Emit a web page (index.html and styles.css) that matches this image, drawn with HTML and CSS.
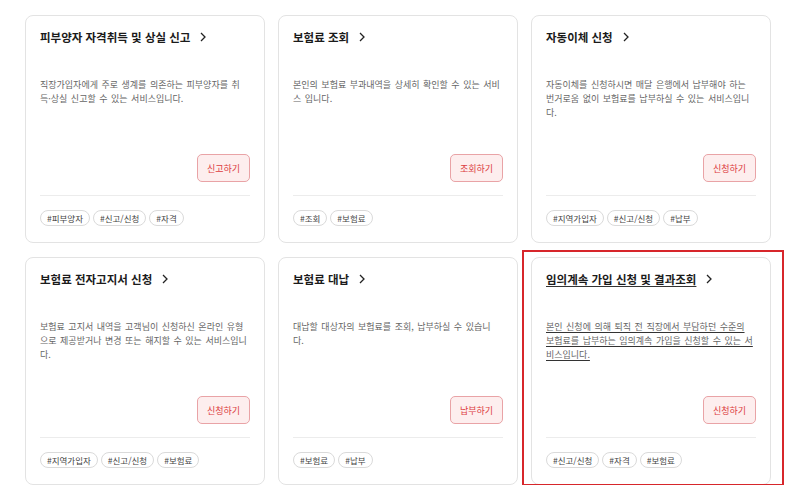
FILE: index.html
```html
<!DOCTYPE html>
<html lang="ko">
<head>
<meta charset="utf-8">
<title>서비스 목록</title>
<link rel="stylesheet" href="styles.css">
</head>
<body>
<main class="grid">
  <article class="card">
    <h3 class="card-title"><span class="title-text">피부양자 자격취득 및 상실 신고</span><svg class="chev" viewBox="0 0 6 10" width="6" height="10"><path d="M1 1l4 4-4 4" fill="none" stroke="#222" stroke-width="1.3"/></svg></h3>
    <p class="card-desc">직장가입자에게 주로 생계를 의존하는 피부양자를 취<br>득·상실 신고할 수 있는 서비스입니다.</p>
    <button class="card-btn">신고하기</button>
    <hr class="divider">
    <ul class="tags"><li>#피부양자</li><li>#신고/신청</li><li>#자격</li></ul>
  </article>
  <article class="card">
    <h3 class="card-title"><span class="title-text">보험료 조회</span><svg class="chev" viewBox="0 0 6 10" width="6" height="10"><path d="M1 1l4 4-4 4" fill="none" stroke="#222" stroke-width="1.3"/></svg></h3>
    <p class="card-desc">본인의 보험료 부과내역을 상세히 확인할 수 있는 서비<br>스 입니다.</p>
    <button class="card-btn">조회하기</button>
    <hr class="divider">
    <ul class="tags"><li>#조회</li><li>#보험료</li></ul>
  </article>
  <article class="card">
    <h3 class="card-title"><span class="title-text">자동이체 신청</span><svg class="chev" viewBox="0 0 6 10" width="6" height="10"><path d="M1 1l4 4-4 4" fill="none" stroke="#222" stroke-width="1.3"/></svg></h3>
    <p class="card-desc">자동이체를 신청하시면 매달 은행에서 납부해야 하는<br>번거로움 없이 보험료를 납부하실 수 있는 서비스입니<br>다.</p>
    <button class="card-btn">신청하기</button>
    <hr class="divider">
    <ul class="tags"><li>#지역가입자</li><li>#신고/신청</li><li>#납부</li></ul>
  </article>
  <article class="card">
    <h3 class="card-title"><span class="title-text">보험료 전자고지서 신청</span><svg class="chev" viewBox="0 0 6 10" width="6" height="10"><path d="M1 1l4 4-4 4" fill="none" stroke="#222" stroke-width="1.3"/></svg></h3>
    <p class="card-desc">보험료 고지서 내역을 고객님이 신청하신 온라인 유형<br>으로 제공받거나 변경 또는 해지할 수 있는 서비스입니<br>다.</p>
    <button class="card-btn">신청하기</button>
    <hr class="divider">
    <ul class="tags"><li>#지역가입자</li><li>#신고/신청</li><li>#보험료</li></ul>
  </article>
  <article class="card">
    <h3 class="card-title"><span class="title-text">보험료 대납</span><svg class="chev" viewBox="0 0 6 10" width="6" height="10"><path d="M1 1l4 4-4 4" fill="none" stroke="#222" stroke-width="1.3"/></svg></h3>
    <p class="card-desc">대납할 대상자의 보험료를 조회, 납부하실 수 있습니<br>다.</p>
    <button class="card-btn">납부하기</button>
    <hr class="divider">
    <ul class="tags"><li>#보험료</li><li>#납부</li></ul>
  </article>
  <article class="card card-active">
    <h3 class="card-title"><span class="title-text">임의계속 가입 신청 및 결과조회</span><svg class="chev" viewBox="0 0 6 10" width="6" height="10"><path d="M1 1l4 4-4 4" fill="none" stroke="#222" stroke-width="1.3"/></svg></h3>
    <p class="card-desc">본인 신청에 의해 퇴직 전 직장에서 부담하던 수준의<br>보험료를 납부하는 임의계속 가입을 신청할 수 있는 서<br>비스입니다.</p>
    <button class="card-btn">신청하기</button>
    <hr class="divider">
    <ul class="tags"><li>#신고/신청</li><li>#자격</li><li>#보험료</li></ul>
  </article>
</main>
</body>
</html>
```

FILE: styles.css
```css
html, body {
  margin: 0;
  padding: 0;
  background: #ffffff;
}

body {
  font-family: "Noto Sans CJK KR", "Noto Sans", sans-serif;
  color: #222;
}

.grid {
  display: grid;
  grid-template-columns: repeat(3, 240px);
  grid-auto-rows: 228px;
  column-gap: 13px;
  row-gap: 14px;
  padding: 15px 0 0 25px;
}

.card {
  position: relative;
  box-sizing: border-box;
  display: flex;
  flex-direction: column;
  padding: 11px 14px 16px 14px;
  border: 1px solid #e3e3e3;
  border-radius: 8px;
  background: #fff;
}

.card-title {
  display: flex;
  align-items: center;
  gap: 10px;
  margin: 0;
  height: 20px;
  font-size: 11.5px;
  font-weight: 700;
  letter-spacing: 0;
  color: #1b1b1b;
}

.chev {
  display: block;
  width: 6px;
  height: 10px;
}

.card-desc {
  margin: 31px 0 0 0;
  font-size: 9px;
  line-height: 14px;
  letter-spacing: 0;
  word-spacing: 1px;
  color: #666;
  white-space: nowrap;
}

.card-btn {
  align-self: flex-end;
  margin-top: auto;
  height: 28px;
  padding: 0 9px;
  border: 1px solid #e9a3a6;
  border-radius: 5px;
  background: #fdeeee;
  color: #dc3b40;
  font-family: inherit;
  font-size: 9px;
  letter-spacing: 0;
}

.divider {
  margin: 13px 0 0 0;
  border: 0;
  border-top: 1px solid #ececec;
  height: 0;
}

.tags {
  display: flex;
  gap: 3px;
  margin: 14px 0 0 0;
  padding: 0;
  list-style: none;
}

.tags li {
  box-sizing: border-box;
  height: 16px;
  padding: 0 6px;
  border: 1px solid #dadada;
  border-radius: 8px;
  font-size: 8.5px;
  line-height: 14px;
  letter-spacing: 0;
  color: #444;
}

.card-active .title-text,
.card-active .card-desc {
  text-decoration: underline;
  text-decoration-color: #333;
  text-underline-offset: 2px;
}

.card-active::after {
  content: "";
  position: absolute;
  box-sizing: border-box;
  left: -10px;
  right: -14px;
  top: -8px;
  height: 236px;
  border: 2px solid #d7262b;
  pointer-events: none;
}
```
